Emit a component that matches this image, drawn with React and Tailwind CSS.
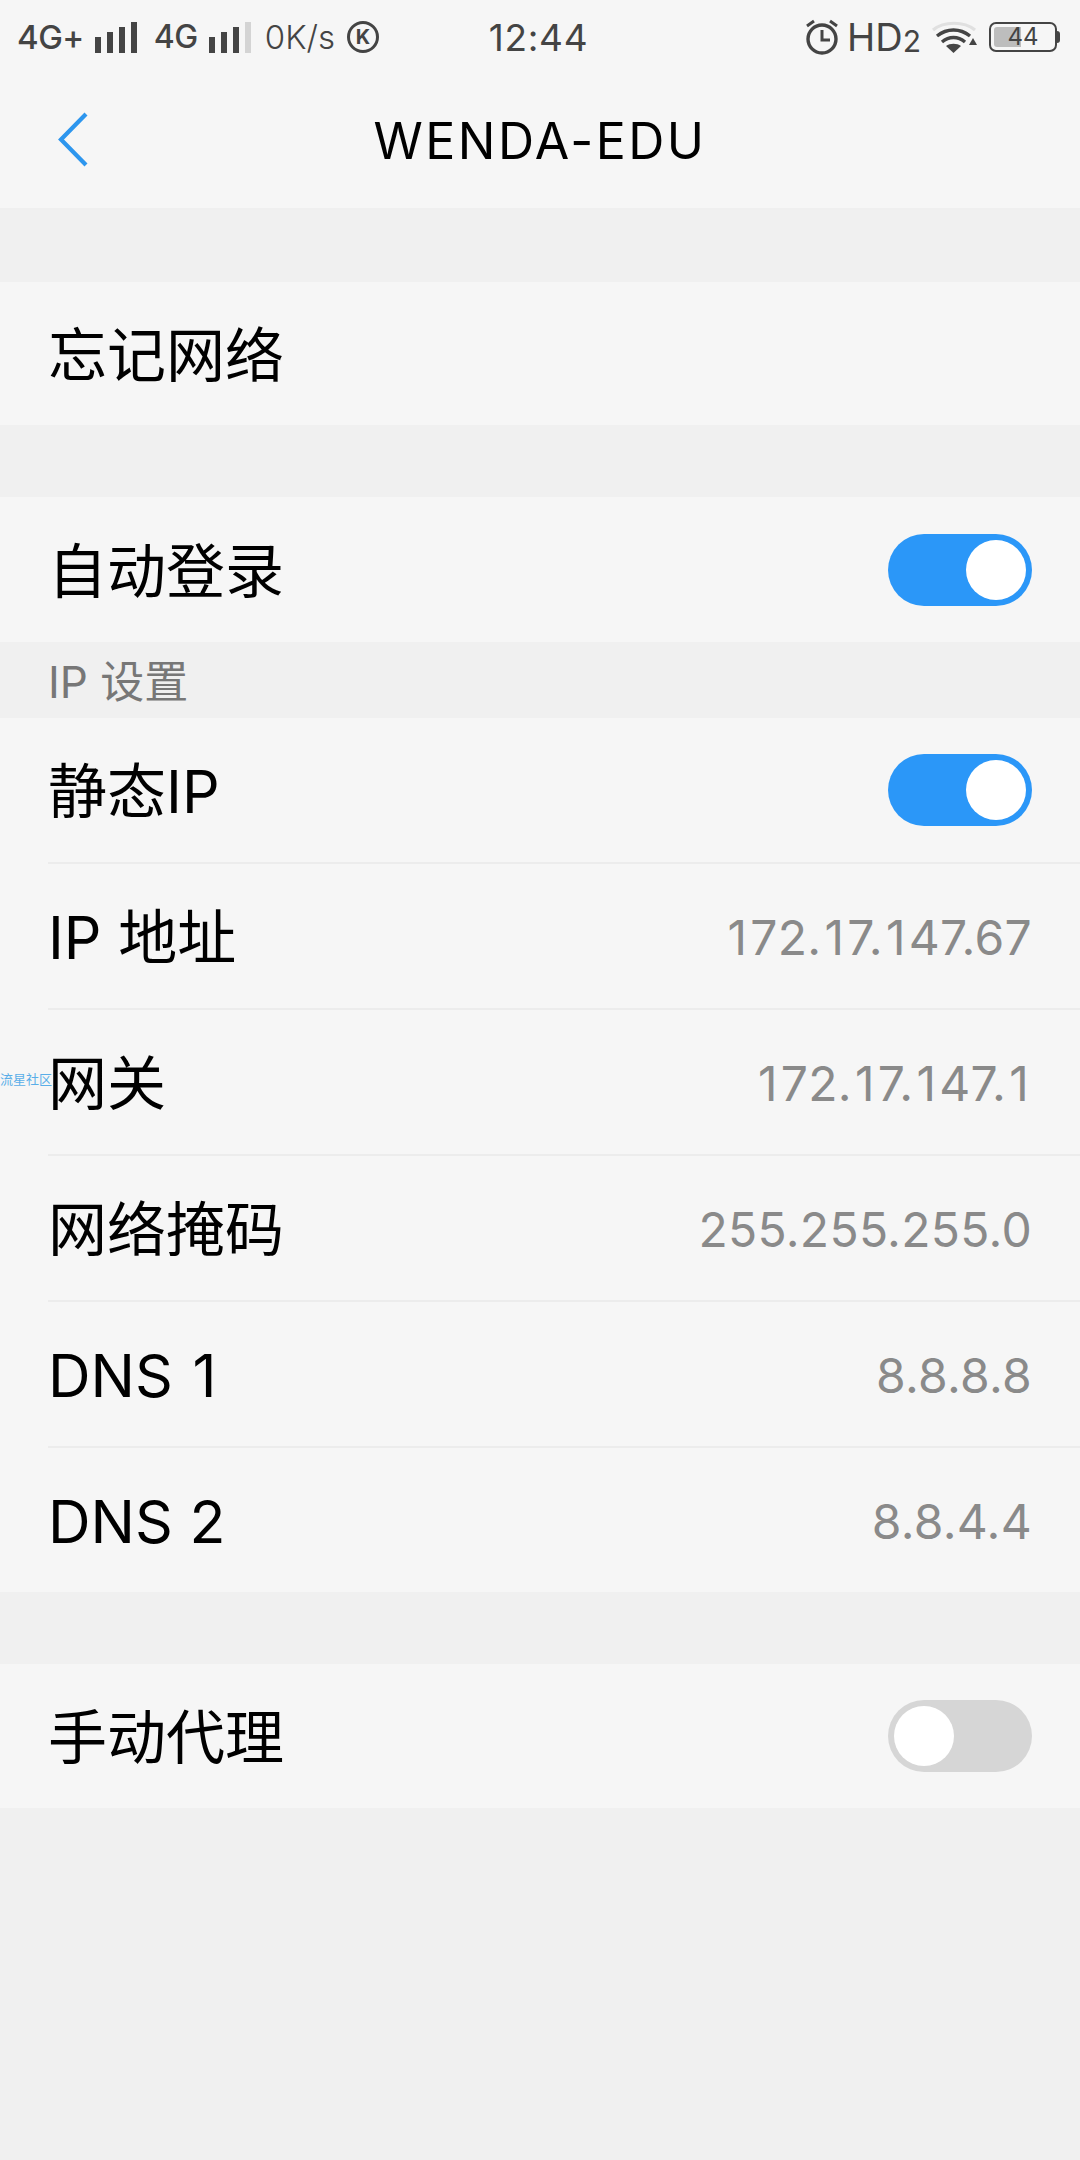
const FONT = "font-['Inter','Noto_Sans_CJK_SC',sans-serif]";

function Bars({ dim }) {
  return (
    <svg width="42" height="31" viewBox="0 0 42 31" className="block">
      <rect x="0" y="15" width="6" height="16" fill="#444" />
      <rect x="12" y="10" width="6" height="21" fill="#444" />
      <rect x="24" y="5" width="6" height="26" fill="#444" />
      <rect x="36" y="0" width="6" height="31" fill={dim ? "#d4d4d4" : "#444"} />
    </svg>
  );
}

function Alarm() {
  return (
    <svg width="34" height="36" viewBox="0 0 34 36" className="block">
      <circle cx="17" cy="20" r="14" fill="none" stroke="#444" strokeWidth="3.4" />
      <path d="M17 11v10h8" fill="none" stroke="#444" strokeWidth="3" />
      <path d="M2 7l7-5M32 7l-7-5" fill="none" stroke="#444" strokeWidth="3" />
    </svg>
  );
}

function Wifi() {
  return (
    <svg width="46" height="34" viewBox="0 0 46 34" className="block">
      <path d="M2 10C13 1 33 1 44 10" fill="none" stroke="#e0e0e0" strokeWidth="3.200" />
      <path d="M6 16C16 8 29 8 39 16" fill="none" stroke="#444" strokeWidth="3.400" />
      <path d="M11 22C18 16 27 16 34 22" fill="none" stroke="#444" strokeWidth="3.400" />
      <path d="M15 26C19 23 26 23 30 26L22.500 33Z" fill="#444" />
      <path d="M42 18L46 25H38Z" fill="#444" />
    </svg>
  );
}

function Battery() {
  return (
    <div className="flex items-center">
      <div className="relative w-[68px] h-[30px] rounded-[7px] border-[2px] border-[#444] flex items-center justify-center overflow-hidden">
        <div className="absolute left-[3px] top-[3px] bottom-[3px] w-[27px] rounded-l-[3px] bg-[#bdbdbd]" />
        <span className="relative text-[24px] leading-none text-[#444]">44</span>
      </div>
      <div className="w-[3px] h-[12px] rounded-r-[3px] bg-[#444]" />
    </div>
  );
}

function StatusBar() {
  return (
    <div className="h-[76px] pl-[17px] pr-[20px] pb-[2px] grid grid-cols-[1fr_auto_1fr] items-center text-[#444]">
      <div className="flex items-center whitespace-nowrap">
        <span className="text-[33px] font-medium leading-none tracking-[-0.5px]">4G+</span>
        <span className="ml-[11px]"><Bars /></span>
        <span className="ml-[17px] text-[32px] font-medium leading-none tracking-[-0.5px]">4G</span>
        <span className="ml-[11px]"><Bars dim /></span>
        <span className="ml-[14px] text-[33px] font-light leading-none">0K/s</span>
        <span className="ml-[12px] w-[32px] h-[32px] rounded-full border-[3px] border-[#444] flex items-center justify-center text-[20px] font-bold leading-none">K</span>
      </div>
      <div className="text-[37px] leading-none tracking-[0.7px]">12:44</div>
      <div className="flex items-center justify-end whitespace-nowrap">
        <Alarm />
        <span className="ml-[8px] text-[38px] leading-none flex items-end">HD<span className="text-[30px] leading-none">2</span></span>
        <span className="ml-[10px]"><Wifi /></span>
        <span className="ml-[12px]"><Battery /></span>
      </div>
    </div>
  );
}

function Header() {
  return (
    <div className="relative h-[134px] pb-[2px] flex items-center justify-center border-b-2 border-[#efefef]">
      <svg width="32" height="56" viewBox="0 0 32 56" className="absolute left-[57px] top-[36px]">
        <path d="M29 2L4 27.500L29 53" fill="none" stroke="#2d96ee" strokeWidth="4.200" />
      </svg>
      <span className="text-[50px] leading-none tracking-[2.500px] text-black">WENDA-EDU</span>
    </div>
  );
}

function Switch({ on }) {
  return (
    <div className={`w-[144px] h-[72px] rounded-full p-[6px] flex ${on ? "bg-[#2b97f8] justify-end" : "bg-[#d6d6d6] justify-start"}`}>
      <div className="w-[60px] h-[60px] rounded-full bg-white" />
    </div>
  );
}

// The reference's "1" has wider side bearings than Inter's.
function Ones({ text }) {
  return text.split("").map((ch, i) =>
    ch === "1"
      ? <span key={i} className="mx-[3px]">{ch}</span>
      : <span key={i}>{ch}</span>
  );
}

function Row({ label, value, toggle, divider, watermark, height = "h-[146px]" }) {
  return (
    <div className="relative pl-[48px] bg-[#f6f6f6]">
      {watermark && (
        <span className="absolute left-0 top-[63px] text-[13px] leading-none text-[#5aaee8] whitespace-nowrap">流星社区</span>
      )}
      <div className={`${height} pr-[48px] flex items-center justify-between ${divider ? "border-b-2 border-[#ececec]" : ""}`}>
        <span className="pt-[3px] text-[59px] leading-none text-black whitespace-nowrap"><Ones text={label} /></span>
        {value && <span className="pt-[4px] text-[48px] tracking-[0.300px] leading-none text-[#8a8a8a] whitespace-nowrap"><Ones text={value} /></span>}
        {toggle !== undefined && <Switch on={toggle} />}
      </div>
    </div>
  );
}

export default function App() {
  return (
    <div className={`w-[1080px] h-[2160px] bg-[#f0f0f0] overflow-hidden ${FONT}`}>
      <div className="bg-[#f6f6f6]">
        <StatusBar />
        <Header />
      </div>
      <div className="mt-[72px]"><Row label="忘记网络" height="h-[143px]" /></div>
      <div className="mt-[72px]"><Row label="自动登录" toggle={true} height="h-[145px]" /></div>
      <div className="h-[76px] pl-[48px] pt-[4px] flex items-center text-[44px] leading-none text-[#777]">IP 设置</div>
      <Row label="静态IP" toggle={true} divider />
      <Row label="IP 地址" value="172.17.147.67" divider />
      <Row label="网关" value="172.17.147.1" divider watermark />
      <Row label="网络掩码" value="255.255.255.0" divider />
      <Row label="DNS 1" value="8.8.8.8" divider />
      <Row label="DNS 2" value="8.8.4.4" height="h-[144px]" />
      <div className="mt-[72px]"><Row label="手动代理" toggle={false} height="h-[144px]" /></div>
    </div>
  );
}
